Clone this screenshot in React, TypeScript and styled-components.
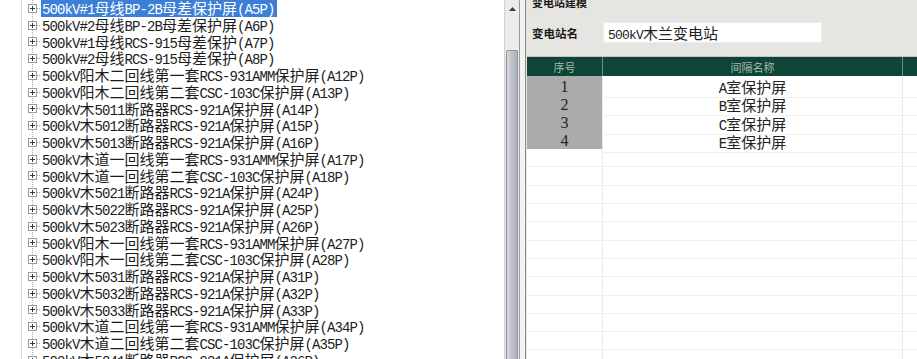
import React from "react";
import styled, { createGlobalStyle } from "styled-components";

const GlobalStyle = createGlobalStyle`
  html, body { margin: 0; padding: 0; background: #ffffff; }
  body { font-family: "Noto Sans CJK SC", sans-serif; }
`;

const Screen = styled.div`
  width: 917px;
  height: 359px;
  display: flex;
  overflow: hidden;
  background: #ffffff;
`;

/* ---------- mixed latin / CJK text ---------- */
const TextLine = styled.span`
  white-space: nowrap;
`;

const LatinRun = styled.span<{ $size: number; $adv: number }>`
  font-family: "Liberation Mono", monospace;
  font-size: ${(p) => p.$size}px;
  letter-spacing: ${(p) => (p.$adv - p.$size * 0.6).toFixed(2)}px;
`;

function Mixed({ text, size = 14, adv = 7.5 }: { text: string; size?: number; adv?: number }) {
  const runs = text.match(/[\x00-\x7F]+|[^\x00-\x7F]+/g) || [];
  return (
    <TextLine>
      {runs.map((r, i) =>
        /^[\x00-\x7F]/.test(r) ? (
          <LatinRun key={i} $size={size} $adv={adv}>
            {r}
          </LatinRun>
        ) : (
          <React.Fragment key={i}>{r}</React.Fragment>
        )
      )}
    </TextLine>
  );
}

/* ---------- tree ---------- */
const TreePane = styled.div`
  width: 504px;
  flex: none;
  height: 100%;
  overflow: hidden;
  background: #ffffff;
`;

const TreeList = styled.div`
  margin-left: 21px;
  height: 100%;
  border-left: 1px solid #dcdcdc;
  background-image: repeating-linear-gradient(to bottom, #a8a8a8 0 1px, transparent 1px 2px);
  background-repeat: no-repeat;
  background-position: 10px 0;
  background-size: 1px 100%;
`;

const TreeRow = styled.div`
  display: flex;
  align-items: center;
  height: 16.75px;
  padding-left: 6px;
`;

const Connector = styled.span`
  width: 4px;
  height: 1px;
  flex: none;
  background-image: repeating-linear-gradient(to right, #a8a8a8 0 1px, transparent 1px 2px);
`;

const NodeLabel = styled.span<{ $selected?: boolean }>`
  display: block;
  height: 16.75px;
  line-height: 16.75px;
  padding: 0 2px 0 1px;
  font-size: 15px;
  white-space: nowrap;
  color: ${(p) => (p.$selected ? "#ffffff" : "#1c1c1c")};
  background: ${(p) => (p.$selected ? "#3b7fd6" : "transparent")};
`;

function PlusBox() {
  return (
    <svg width="9" height="9" viewBox="0 0 9 9" style={{ flex: "none" }}>
      <rect x="0.5" y="0.5" width="8" height="8" fill="#ffffff" stroke="#9a9a9a" />
      <line x1="2" y1="4.5" x2="7" y2="4.5" stroke="#3a3a3a" />
      <line x1="4.5" y1="2" x2="4.5" y2="7" stroke="#3a3a3a" />
    </svg>
  );
}

/* ---------- scrollbar / splitter ---------- */
const ScrollBar = styled.div`
  width: 15px;
  flex: none;
  display: flex;
  flex-direction: column;
  background: #ececec;
  border-left: 1px solid #d2d2d2;
  box-sizing: border-box;
`;

const ScrollButton = styled.div`
  height: 17px;
  display: flex;
  align-items: center;
  justify-content: center;
`;

const ScrollTrack = styled.div`
  flex: 1;
  display: flex;
  flex-direction: column;
  padding-top: 33px;
`;

const ScrollThumb = styled.div`
  flex: 1;
  margin: 0 1px;
  border: 1px solid #8e9298;
  border-bottom: none;
  border-radius: 2px 2px 0 0;
  background: linear-gradient(to right, #d8dbdf, #c2c6cb 40%, #aeb2b8);
`;

const Splitter = styled.div`
  width: 7px;
  flex: none;
  background: #f2f2f2;
  border-left: 1px solid #9c9c9c;
  border-right: 1px solid #8a8a8a;
  box-sizing: border-box;
`;

/* ---------- right panel ---------- */
const RightPane = styled.div`
  flex: 1;
  display: flex;
  flex-direction: column;
  background: #e7e5e2;
  overflow: hidden;
`;

const GroupTitle = styled.div`
  margin-top: -4px;
  padding-left: 6px;
  height: 12px;
  line-height: 12px;
  font-size: 11px;
  font-weight: 700;
  color: #1a1a1a;
`;

const NameRow = styled.div`
  display: flex;
  align-items: center;
  margin-top: 14px;
  padding-left: 6px;
  height: 21px;
`;

const FieldLabel = styled.span`
  width: 71px;
  font-size: 11.5px;
  font-weight: 700;
  color: #1a1a1a;
`;

const NameInput = styled.div`
  width: 219px;
  height: 21px;
  box-sizing: border-box;
  background: #ffffff;
  border: 1px solid #ececec;
  padding-left: 4px;
  line-height: 20px;
  font-size: 15px;
  color: #222222;
  white-space: nowrap;
`;

const Table = styled.div`
  margin-top: 13px;
  margin-left: 1px;
  flex: 1;
  background: #ffffff;
  border-top: 1px solid #c4c4c4;
`;

const HeaderRow = styled.div`
  display: grid;
  grid-template-columns: 76px 300px 1fr;
  height: 19px;
  background: #0e4536;
`;

const HeaderCell = styled.div`
  display: flex;
  align-items: center;
  justify-content: center;
  font-size: 11px;
  color: #a7bcb2;
  border-right: 1px solid #6f8b82;
  &:last-child { border-right: none; }
`;

const BodyRow = styled.div`
  display: grid;
  grid-template-columns: 76px 300px 1fr;
  height: 18.3px;
`;

const IndexCell = styled.div<{ $filled?: boolean }>`
  display: flex;
  align-items: center;
  justify-content: center;
  font-family: "Liberation Serif", serif;
  font-size: 16px;
  color: #222222;
  background: ${(p) => (p.$filled ? "#ababab" : "#ffffff")};
  border-bottom: 1px solid ${(p) => (p.$filled ? "#c6c6c6" : "#f0eeee")};
  border-right: 1px solid #ece9e9;
  box-sizing: border-box;
`;

const NameCell = styled.div`
  display: flex;
  align-items: center;
  justify-content: center;
  font-size: 15px;
  color: #222222;
  border-bottom: 1px solid #f0eeee;
  border-right: 1px solid #ebe8e8;
  box-sizing: border-box;
`;

const TailCell = styled.div`
  border-bottom: 1px solid #f0eeee;
  box-sizing: border-box;
`;

const nodes = [
  "500kV#1母线BP-2B母差保护屏(A5P)",
  "500kV#2母线BP-2B母差保护屏(A6P)",
  "500kV#1母线RCS-915母差保护(A7P)",
  "500kV#2母线RCS-915母差保护(A8P)",
  "500kV阳木二回线第一套RCS-931AMM保护屏(A12P)",
  "500kV阳木二回线第二套CSC-103C保护屏(A13P)",
  "500kV木5011断路器RCS-921A保护屏(A14P)",
  "500kV木5012断路器RCS-921A保护屏(A15P)",
  "500kV木5013断路器RCS-921A保护屏(A16P)",
  "500kV木道一回线第一套RCS-931AMM保护屏(A17P)",
  "500kV木道一回线第二套CSC-103C保护屏(A18P)",
  "500kV木5021断路器RCS-921A保护屏(A24P)",
  "500kV木5022断路器RCS-921A保护屏(A25P)",
  "500kV木5023断路器RCS-921A保护屏(A26P)",
  "500kV阳木一回线第一套RCS-931AMM保护屏(A27P)",
  "500kV阳木一回线第二套CSC-103C保护屏(A28P)",
  "500kV木5031断路器RCS-921A保护屏(A31P)",
  "500kV木5032断路器RCS-921A保护屏(A32P)",
  "500kV木5033断路器RCS-921A保护屏(A33P)",
  "500kV木道二回线第一套RCS-931AMM保护屏(A34P)",
  "500kV木道二回线第二套CSC-103C保护屏(A35P)",
  "500kV木5041断路器RCS-921A保护屏(A36P)",
];

const bays = ["A室保护屏", "B室保护屏", "C室保护屏", "E室保护屏"];

export default function App() {
  const emptyRows = Array.from({ length: 12 });
  return (
    <>
      <GlobalStyle />
      <Screen>
        <TreePane>
          <TreeList>
            {nodes.map((n, i) => (
              <TreeRow key={i}>
                <PlusBox />
                <Connector />
                <NodeLabel $selected={i === 0}>
                  <Mixed text={n} />
                </NodeLabel>
              </TreeRow>
            ))}
          </TreeList>
        </TreePane>
        <ScrollBar>
          <ScrollButton>
            <svg width="7" height="4" viewBox="0 0 7 4">
              <path d="M0 4 L3.5 0 L7 4 Z" fill="#3c3c3c" />
            </svg>
          </ScrollButton>
          <ScrollTrack>
            <ScrollThumb />
          </ScrollTrack>
        </ScrollBar>
        <Splitter />
        <RightPane>
          <GroupTitle>变电站建模</GroupTitle>
          <NameRow>
            <FieldLabel>变电站名</FieldLabel>
            <NameInput>
              <Mixed text="500kV木兰变电站" size={13} adv={7} />
            </NameInput>
          </NameRow>
          <Table>
            <HeaderRow>
              <HeaderCell>序号</HeaderCell>
              <HeaderCell>间隔名称</HeaderCell>
              <HeaderCell />
            </HeaderRow>
            {bays.map((b, i) => (
              <BodyRow key={b}>
                <IndexCell $filled>{i + 1}</IndexCell>
                <NameCell>
                  <Mixed text={b} />
                </NameCell>
                <TailCell />
              </BodyRow>
            ))}
            {emptyRows.map((_, i) => (
              <BodyRow key={"e" + i}>
                <IndexCell />
                <NameCell />
                <TailCell />
              </BodyRow>
            ))}
          </Table>
        </RightPane>
      </Screen>
    </>
  );
}
